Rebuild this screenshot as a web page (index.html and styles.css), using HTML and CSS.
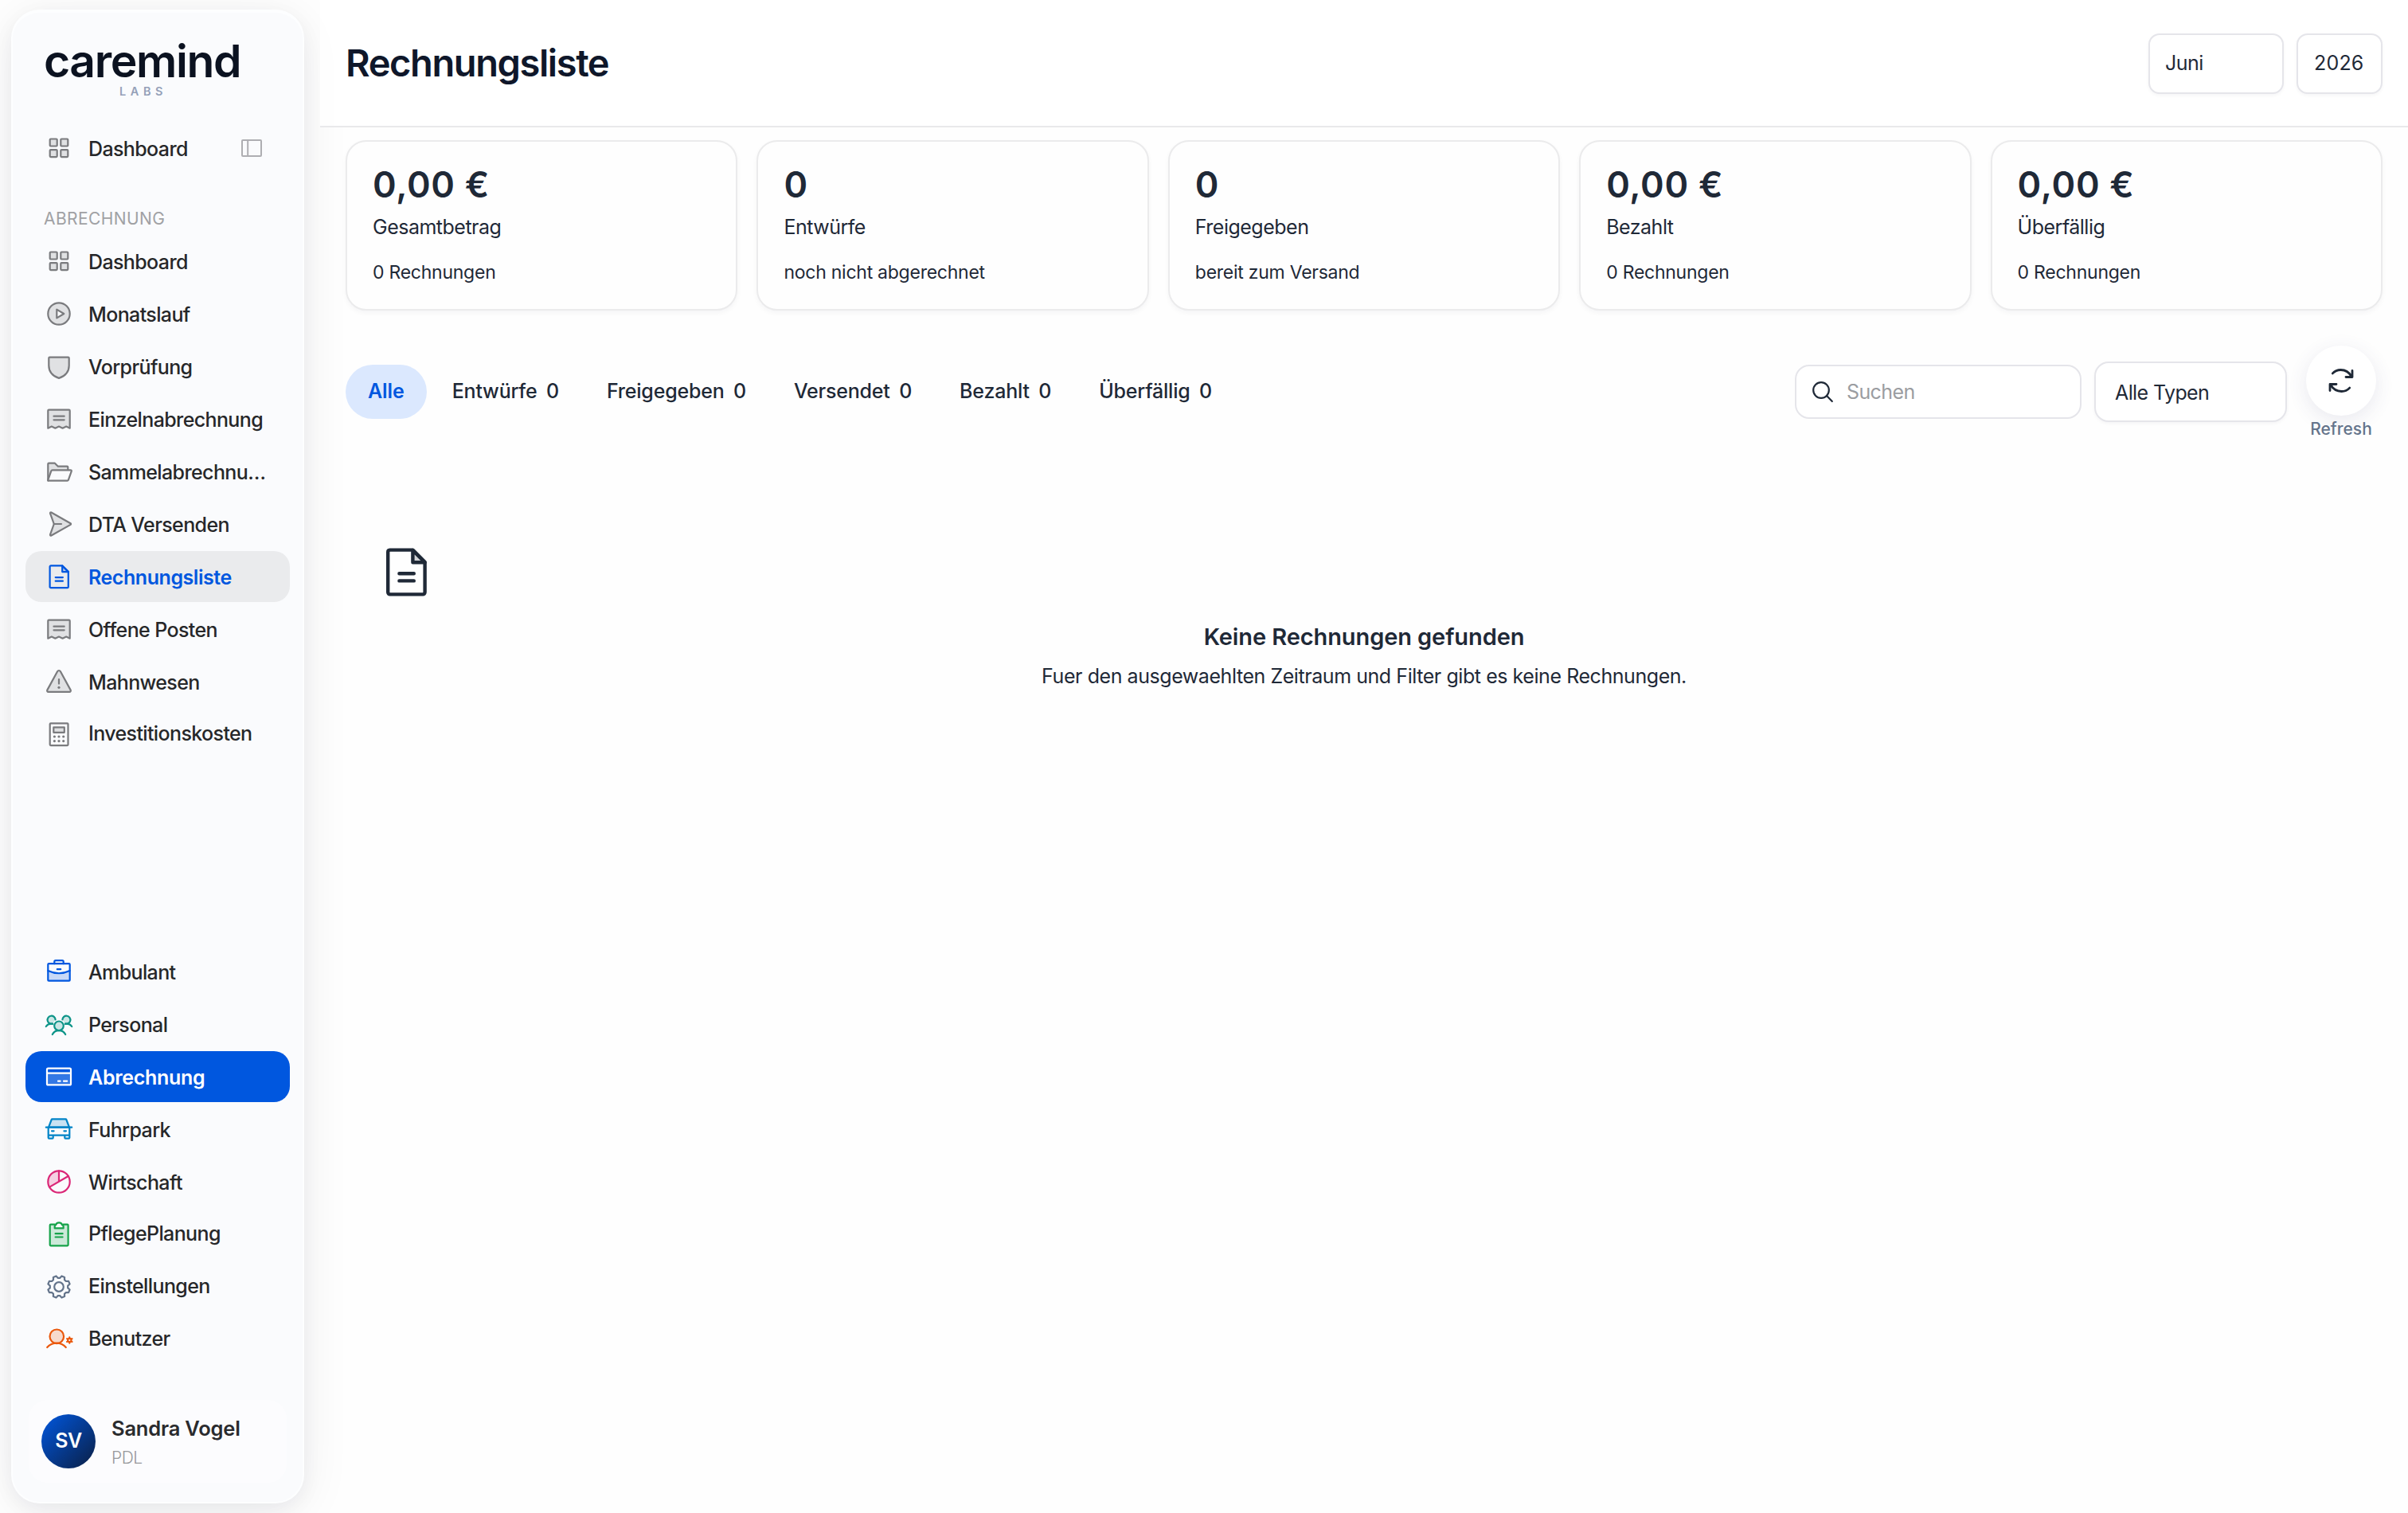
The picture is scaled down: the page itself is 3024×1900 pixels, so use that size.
FILE: index.html
```html
<!DOCTYPE html>
<html lang="de">
<head>
    <meta charset="UTF-8">
    <title>Rechnungsliste - caremind</title>
    <link rel="stylesheet" href="styles.css">
</head>
<body>
    <!-- shared icons -->
    <svg class="icon-defs" width="0" height="0">
        <symbol id="icon-dashboard" viewBox="0 0 36 36">
            <rect class="tint" x="6.7" y="6.5" width="9" height="9" rx="1"/>
            <rect class="tint" x="20.3" y="6.5" width="9" height="9" rx="1"/>
            <rect class="tint" x="6.7" y="20.1" width="9" height="9" rx="1"/>
            <rect class="tint" x="20.3" y="20.1" width="9" height="9" rx="1"/>
        </symbol>
        <symbol id="icon-receipt" viewBox="0 0 36 36">
            <path class="tint" d="M4.3 29.7V7.7a1 1 0 0 1 1-1h25.4a1 1 0 0 1 1 1v22l-4.5-2.2-4.6 2.2-4.6-2.2-4.6 2.2-4.6-2.2z"/>
            <path d="M11.5 14.7h13.2M11.5 19.3h13.2"/>
        </symbol>
        <symbol id="icon-document" viewBox="0 0 36 36">
            <path d="M7.8 4.3h14.4l7.6 7.6v19a1.3 1.3 0 0 1-1.3 1.3H7.9a1.3 1.3 0 0 1-1.3-1.3V5.6a1.3 1.3 0 0 1 1.2-1.3z"/>
            <path class="tint" d="M22.2 4.5v7.6h7.6z"/>
            <path d="M13.7 19.1h9.2M13.7 23.7h9.2"/>
        </symbol>
    </svg>

    <aside class="sidebar">
        <div class="logo">
            <div class="logo-name">caremind</div>
            <div class="logo-sub">LABS</div>
        </div>

        <nav class="nav">
            <a class="nav-item">
                <svg class="icon"><use href="#icon-dashboard"/></svg>
                <span>Dashboard</span>
                <svg class="icon toggle" viewBox="0 0 36 36"><rect x="6" y="8" width="24" height="20" rx="1"/><path d="M13.2 8v20"/></svg>
            </a>
        </nav>

        <div class="nav-heading">ABRECHNUNG</div>
        <nav class="nav">
            <a class="nav-item">
                <svg class="icon"><use href="#icon-dashboard"/></svg>
                <span>Dashboard</span>
            </a>
            <a class="nav-item">
                <svg class="icon" viewBox="0 0 36 36"><circle class="tint" cx="18" cy="18" r="13.7"/><path class="clear" d="M15.3 12.6v10.8l9-5.4z"/></svg>
                <span>Monatslauf</span>
            </a>
            <a class="nav-item">
                <svg class="icon" viewBox="0 0 36 36"><path class="tint" d="M6.3 6.7h23.4a1 1 0 0 1 1 1V17c0 8.5-6 13.6-12.7 15.9C11.3 30.6 5.3 25.5 5.3 17V7.7a1 1 0 0 1 1-1z"/></svg>
                <span>Vorprüfung</span>
            </a>
            <a class="nav-item">
                <svg class="icon"><use href="#icon-receipt"/></svg>
                <span>Einzelnabrechnung</span>
            </a>
            <a class="nav-item">
                <svg class="icon" viewBox="0 0 36 36"><path class="tint" d="M4.3 29.6V8.7a1 1 0 0 1 1-1h7.6l4 4h11.4a1 1 0 0 1 1 1v3.6"/><path class="clear" d="M9.8 16.3h23a1 1 0 0 1 1 1.3l-4 11.3a1.3 1.3 0 0 1-1.2.8H5a.8.8 0 0 1-.7-1.1l4-11.3a1.6 1.6 0 0 1 1.5-1z"/></svg>
                <span>Sammelabrechnu…</span>
            </a>
            <a class="nav-item">
                <svg class="icon" viewBox="0 0 36 36"><path class="tint" d="M8.4 3.5l24.2 13.7a1 1 0 0 1 0 1.7L8.4 32.5a1 1 0 0 1-1.4-1.2L11.8 18 7 4.7a1 1 0 0 1 1.4-1.2z"/><path d="M11.8 18H21"/></svg>
                <span>DTA Versenden</span>
            </a>
            <a class="nav-item current">
                <svg class="icon"><use href="#icon-document"/></svg>
                <span>Rechnungsliste</span>
            </a>
            <a class="nav-item">
                <svg class="icon"><use href="#icon-receipt"/></svg>
                <span>Offene Posten</span>
            </a>
            <a class="nav-item">
                <svg class="icon" viewBox="0 0 36 36"><path class="tint" d="M16.2 5a2.1 2.1 0 0 1 3.6 0l12.9 23.6a1.6 1.6 0 0 1-1.4 2.3H4.7a1.6 1.6 0 0 1-1.4-2.3z"/><path d="M18 15v5.6"/><circle class="dot" cx="18" cy="25.3" r="1.6"/></svg>
                <span>Mahnwesen</span>
            </a>
            <a class="nav-item snug">
                <svg class="icon low" viewBox="0 0 36 36"><rect x="6.7" y="4.3" width="22.8" height="27.8" rx="1"/><rect class="tint" x="11.3" y="9.3" width="13.5" height="6.5"/><g class="dot"><circle cx="12.4" cy="21" r="1.6"/><circle cx="18" cy="21" r="1.6"/><circle cx="23.7" cy="21" r="1.6"/><circle cx="12.4" cy="26.6" r="1.6"/><circle cx="18" cy="26.6" r="1.6"/><circle cx="23.7" cy="26.6" r="1.6"/></g></svg>
                <span>Investitionskosten</span>
            </a>
        </nav>

        <nav class="nav nav-modules">
            <a class="nav-item">
                <svg class="icon blue" viewBox="0 0 36 36"><path class="tint nostroke" d="M4.3 17q13.7 6.5 27.4 0v12.7H4.3z"/><rect x="4.3" y="8.2" width="27.4" height="21.5" rx="1"/><path d="M12.3 8.2V5.8a1.6 1.6 0 0 1 1.6-1.6h8.2a1.6 1.6 0 0 1 1.6 1.6v2.4M4.3 17q13.7 6.5 27.4 0M15.8 15.2h4.4"/></svg>
                <span>Ambulant</span>
            </a>
            <a class="nav-item">
                <svg class="icon teal" viewBox="0 0 36 36"><circle class="tint" cx="18" cy="20.3" r="5.8"/><path d="M9.8 31c1.6-3 4.7-4.9 8.2-4.9s6.6 1.9 8.2 4.9"/><path class="tint" d="M10 17.5a5 5 0 1 1 3.6-5"/><path class="tint" d="M26 17.5a5 5 0 1 0-3.6-5"/><path d="M1.8 21c1.5-2.3 4.5-4 8.3-3.2M34.2 21c-1.5-2.3-4.5-4-8.3-3.2"/></svg>
                <span>Personal</span>
            </a>
            <a class="nav-item active">
                <svg class="icon" viewBox="0 0 36 36"><path class="tint nostroke" d="M3 13.7h30v14.6H3z"/><rect x="3" y="7.7" width="30" height="20.7" rx="1.5"/><path d="M3 13.7h30M17 23.7h2.6M24 23.7h4.2"/></svg>
                <span>Abrechnung</span>
            </a>
            <a class="nav-item">
                <svg class="icon sky" viewBox="0 0 36 36"><path class="tint" d="M5 15.7L8.7 6a1 1 0 0 1 1-.7h16.6a1 1 0 0 1 1 .7L31 15.7z"/><path d="M1.8 15.7h32.4M4.7 16v9.7h26.6V16M9 20.3h2.6M24.4 20.3H27M4.7 25.7v3a1 1 0 0 0 1 1h4a1 1 0 0 0 1-1v-3M25.3 25.7v3a1 1 0 0 0 1 1h4a1 1 0 0 0 1-1v-3"/></svg>
                <span>Fuhrpark</span>
            </a>
            <a class="nav-item">
                <svg class="icon pink" viewBox="0 0 36 36"><path class="tint nostroke" d="M18 4.3V18L6.3 24.6A13.7 13.7 0 0 1 18 4.3z"/><circle cx="18" cy="18" r="13.7"/><path d="M18 4.3V18M6.3 24.6L29.7 11"/></svg>
                <span>Wirtschaft</span>
            </a>
            <a class="nav-item snug">
                <svg class="icon low green" viewBox="0 0 36 36"><path class="tint" d="M12.7 5.7h-5a1 1 0 0 0-1 1v24.6a1 1 0 0 0 1 1h20.9a1 1 0 0 0 1-1V6.7a1 1 0 0 0-1-1h-5"/><path class="clear" d="M12.7 10.4V7.7a2 2 0 0 1 1.4-1.5c.4-1.7 2-2.8 4-2.8s3.5 1.1 3.9 2.8a2 2 0 0 1 1.6 1.5v2.7z"/><path d="M13.6 17.2h9M13.6 21.5h9"/></svg>
                <span>PflegePlanung</span>
            </a>
            <a class="nav-item">
                <svg class="icon low slate" viewBox="0 0 36 36"><circle cx="18" cy="18" r="5.8"/><path d="M29.2 16.6v2.8l2.4 2.1-1.5 3.6-3.2-.1-1.9 1.9.1 3.2-3.6 1.5-2.1-2.4h-2.8l-2.1 2.4-3.6-1.5.1-3.2L9.1 25l-3.2.1-1.5-3.6 2.4-2.1v-2.8l-2.4-2.1 1.5-3.6 3.2.1L11 9.1l-.1-3.2 3.6-1.5 2.1 2.4h2.8l2.1-2.4 3.6 1.5-.1 3.2 1.9 1.9 3.2-.1 1.5 3.6z"/></svg>
                <span>Einstellungen</span>
            </a>
            <a class="nav-item">
                <svg class="icon orange" viewBox="0 0 36 36"><circle class="tint" cx="15.3" cy="16.3" r="8.8"/><path d="M3.2 30c3-3.4 7.3-5.4 12.1-5.4s8.5 2 11.5 5.4"/><path d="M31.3 17.3v7.4M28.1 19.1l6.4 3.8M28.1 22.9l6.4-3.8"/><circle class="clear" cx="31.3" cy="21" r="2.2"/></svg>
                <span>Benutzer</span>
            </a>
        </nav>

        <div class="user">
            <div class="avatar">SV</div>
            <div>
                <div class="user-name">Sandra Vogel</div>
                <div class="user-role">PDL</div>
            </div>
        </div>
    </aside>

    <main class="main">
        <header class="header">
            <h1>Rechnungsliste</h1>
            <div class="select month">Juni</div>
            <div class="select year">2026</div>
        </header>

        <section class="stats">
            <div class="stat">
                <div class="stat-value">0,00 €</div>
                <div class="stat-label">Gesamtbetrag</div>
                <div class="stat-note">0 Rechnungen</div>
            </div>
            <div class="stat">
                <div class="stat-value">0</div>
                <div class="stat-label">Entwürfe</div>
                <div class="stat-note">noch nicht abgerechnet</div>
            </div>
            <div class="stat">
                <div class="stat-value">0</div>
                <div class="stat-label">Freigegeben</div>
                <div class="stat-note">bereit zum Versand</div>
            </div>
            <div class="stat">
                <div class="stat-value">0,00 €</div>
                <div class="stat-label">Bezahlt</div>
                <div class="stat-note">0 Rechnungen</div>
            </div>
            <div class="stat">
                <div class="stat-value">0,00 €</div>
                <div class="stat-label">Überfällig</div>
                <div class="stat-note">0 Rechnungen</div>
            </div>
        </section>

        <section class="toolbar">
            <div class="tabs">
                <a class="tab selected">Alle</a>
                <a class="tab">Entwürfe <span>0</span></a>
                <a class="tab">Freigegeben <span>0</span></a>
                <a class="tab">Versendet <span>0</span></a>
                <a class="tab">Bezahlt <span>0</span></a>
                <a class="tab">Überfällig <span>0</span></a>
            </div>
            <div class="search">
                <svg class="icon" viewBox="0 0 36 36"><circle cx="16" cy="16" r="9.8"/><path d="M23 23l6.8 7"/></svg>
                <span>Suchen</span>
            </div>
            <div class="select type">Alle Typen</div>
            <div class="refresh">
                <div class="refresh-button">
                    <svg class="icon" viewBox="0 0 36 36"><path d="M7.3 8.9C10 6 13.5 4.5 17.5 4.5c5.8 0 10.8 3.3 13.8 8.5M32 5.5v8h-8M28.7 27.1c-2.7 2.9-6.2 4.4-10.2 4.4-5.8 0-10.8-3.3-13.8-8.5M4 30.5v-8h8"/></svg>
                </div>
                <div class="refresh-label">Refresh</div>
            </div>
        </section>

        <section class="empty">
            <svg class="icon empty-icon"><use href="#icon-document"/></svg>
            <h2>Keine Rechnungen gefunden</h2>
            <p>Fuer den ausgewaehlten Zeitraum und Filter gibt es keine Rechnungen.</p>
        </section>
    </main>
</body>
</html>
```
FILE: styles.css
```css
* {
    box-sizing: border-box;
}
body {
    margin: 0;
    height: 1900px;
    display: flex;
    gap: 20px;
    overflow: hidden;
    background: #fefefe;
    color: #1f2937;
    font-family: "Inter", sans-serif;
    font-size: 25px;
    line-height: 32px;
}
.icon-defs {
    display: none;
}

/* Icons */
.icon {
    width: 36px;
    height: 36px;
    flex-shrink: 0;
    overflow: visible;
    fill: none;
    color: #7a7b7e;
    stroke: currentColor;
    stroke-width: 2.2;
    stroke-linecap: round;
    stroke-linejoin: round;
}
.tint {
    fill: currentColor;
    fill-opacity: 0.2;
}
.clear {
    fill: #fafbfd;
}
.nostroke {
    stroke: none;
}
.dot {
    fill: currentColor;
    stroke: none;
}
.icon.low {
    margin-top: 4px;
}
.icon.toggle {
    margin-left: auto;
    margin-right: 6px;
    color: #aeaeb2;
    stroke-width: 2;
}
.icon.blue { color: #0057df; }
.icon.teal { color: #0d9488; }
.icon.sky { color: #0284c7; }
.icon.pink { color: #db2777; }
.icon.green { color: #16a34a; }
.icon.slate { color: #64748b; }
.icon.orange { color: #ea580c; }

/* Sidebar */
.sidebar {
    width: 368px;
    height: 1876px;
    margin: 12px 0 0 14px;
    padding: 32px 16px 24px;
    flex-shrink: 0;
    display: flex;
    flex-direction: column;
    border: 2px solid #fdfeff;
    border-top-width: 4px;
    border-radius: 36px;
    background: #fafbfd;
    box-shadow: 0 8px 64px rgba(15, 23, 42, 0.07), 0 8px 24px rgba(15, 23, 42, 0.05);
}
.logo {
    width: 245px;
    height: 106px;
    margin-left: 23px;
    color: #0b1220;
}
.logo-name {
    height: 56px;
    line-height: 58px;
    font-size: 57px;
    font-weight: 600;
    letter-spacing: -1.4px;
}
.logo-sub {
    height: 20px;
    margin-left: 95px;
    line-height: 21px;
    font-size: 14.5px;
    font-weight: 600;
    letter-spacing: 5.6px;
    color: #94a0b8;
}
.nav {
    display: flex;
    flex-direction: column;
    gap: 2px;
}
.nav-item {
    height: 64px;
    padding: 0 24px;
    display: flex;
    align-items: center;
    gap: 19px;
    border-radius: 20px;
    color: #262729;
    font-weight: 450;
    letter-spacing: -0.62px;
    white-space: nowrap;
}
.nav-item span {
    padding-top: 2px;
}
.nav-item.snug {
    margin-top: -2px;
}
.nav-item.current {
    background: #eaebed;
    color: #0057df;
    font-weight: 600;
    letter-spacing: -0.45px;
}
.nav-item.active {
    background: #0057df;
    color: #fff;
    font-weight: 600;
    letter-spacing: -0.3px;
}
.current .icon,
.active .icon {
    color: inherit;
}
.nav-heading {
    height: 78px;
    padding: 39px 0 0 23px;
    font-size: 21px;
    line-height: 36px;
    letter-spacing: 0.4px;
    color: #a0a1a4;
}
.nav-modules {
    margin-top: auto;
}
.user {
    height: 104px;
    margin: 46px 4px 0;
    padding: 0 16px;
    display: flex;
    align-items: center;
    gap: 20px;
    border-radius: 24px;
    background: #fcfcfe;
}
.avatar {
    width: 68px;
    height: 68px;
    border-radius: 50%;
    background: linear-gradient(135deg, #0057df, #0b1f44);
    color: #fff;
    font-weight: 600;
    letter-spacing: -0.5px;
    line-height: 66px;
    text-align: center;
}
.user-name {
    margin-top: 3px;
    font-size: 25.5px;
    font-weight: 600;
    line-height: 38px;
    letter-spacing: -0.2px;
    color: #2a2b2e;
}
.user-role {
    font-size: 21px;
    font-weight: 350;
    line-height: 36px;
    letter-spacing: -0.5px;
    color: #97989b;
}

/* Main area */
.main {
    flex: 1;
}
.header {
    height: 160px;
    padding: 0 32px;
    display: flex;
    align-items: center;
    gap: 16px;
    background: rgba(255, 255, 255, 0.7);
    border-bottom: 2px solid #e9e9eb;
}
h1 {
    margin: 0 auto 0 0;
    font-size: 47px;
    font-weight: 600;
    line-height: 60px;
    letter-spacing: -1.4px;
    color: #0f172a;
}
.select {
    height: 76px;
    padding: 0 19px;
    border: 2px solid #e5e5ea;
    border-radius: 14px;
    background: #fff;
    line-height: 73px;
    letter-spacing: -0.5px;
    box-shadow: 0 2px 4px rgba(15, 23, 42, 0.04);
}
.header .select {
    margin-top: 2px;
    line-height: 71px;
}
.month {
    width: 170px;
}
.year {
    width: 108px;
    padding-left: 20px;
    letter-spacing: 0.2px;
}

/* Stat cards */
.stats {
    padding: 16px 32px 0;
    display: grid;
    grid-template-columns: repeat(5, 1fr);
    gap: 24px;
}
.stat {
    height: 214px;
    padding: 25px 32px;
    border: 2px solid #ebebec;
    border-radius: 26px;
    background: #fefefe;
    box-shadow: 0 3px 6px rgba(15, 23, 42, 0.04);
}
.stat-value {
    font-size: 45px;
    font-weight: 600;
    line-height: 58px;
    letter-spacing: 0.7px;
}
.stat-label {
    margin-top: 7px;
    font-weight: 370;
    line-height: 34px;
    letter-spacing: -0.5px;
}
.stat-note {
    margin-top: 24px;
    font-size: 23px;
    font-weight: 370;
    line-height: 32px;
    letter-spacing: -0.25px;
}

/* Filters */
.toolbar {
    height: 128px;
    margin-top: 40px;
    padding: 0 32px;
    display: flex;
    align-items: flex-start;
    gap: 16px;
}
.tabs {
    margin: 28px auto 0 0;
    display: flex;
    gap: 4px;
}
.tab {
    height: 68px;
    padding: 0 28px;
    border-radius: 34px;
    font-weight: 450;
    line-height: 67px;
    letter-spacing: -0.2px;
}
.tab span {
    margin-left: 5px;
}
.tab.selected {
    background: #dbe8fe;
    color: #0057df;
    font-weight: 600;
    letter-spacing: -0.1px;
}
.search {
    width: 360px;
    height: 68px;
    margin-top: 28px;
    padding-left: 15px;
    display: flex;
    align-items: center;
    gap: 12px;
    border: 2px solid #e5e5ea;
    border-radius: 18px;
    background: #fff;
    color: #9b9da1;
    letter-spacing: -0.6px;
}
.search .icon {
    color: #1f2937;
}
.type {
    width: 242px;
    margin-top: 24px;
    padding: 0 24px;
    border-radius: 18px;
    line-height: 75px;
    letter-spacing: -0.6px;
}
.refresh {
    width: 104px;
    padding-top: 4px;
    display: flex;
    flex-direction: column;
    align-items: center;
}
.refresh-button {
    width: 88px;
    height: 88px;
    display: flex;
    align-items: center;
    justify-content: center;
    border-radius: 50%;
    background: #fff;
    box-shadow: 0 6px 24px rgba(60, 60, 120, 0.11);
}
.refresh-button .icon {
    color: #1f2937;
    stroke-width: 2.8;
}
.refresh-label {
    margin-top: 1px;
    font-size: 21px;
    font-weight: 450;
    letter-spacing: 0;
    color: #64748b;
}

/* Empty state */
.empty {
    padding: 124px 32px 0;
    text-align: center;
}
.empty-icon {
    display: block;
    width: 72px;
    height: 72px;
    margin-left: 40px;
    color: #1f2937;
}
.empty h2 {
    margin: 26px 0 0;
    font-size: 29px;
    font-weight: 600;
    line-height: 40px;
    letter-spacing: -0.1px;
}
.empty p {
    margin: 11px 0 0;
    font-weight: 370;
    line-height: 36px;
    letter-spacing: -0.44px;
}
```
